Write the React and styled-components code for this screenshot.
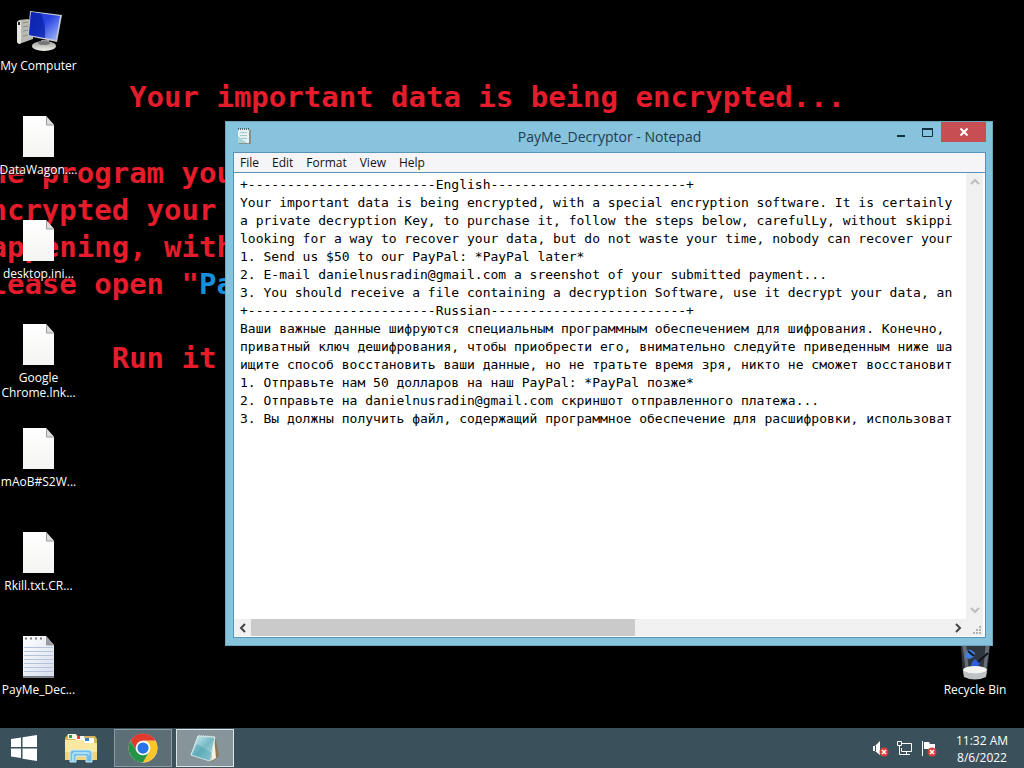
import React from "react";
import styled, { createGlobalStyle } from "styled-components";

const ui = `"Open Sans", "Noto Sans", sans-serif`;
const mono = `"DejaVu Sans Mono", "Liberation Mono", monospace`;

const Global = createGlobalStyle`
  * { box-sizing: border-box; }
  body { margin: 0; background: #000; font-family: ${ui}; }
  button { font: inherit; border: 0; padding: 0; background: none; color: inherit; }
  svg { display: block; }
`;

const Screen = styled.div`
  height: 100vh;
  display: flex;
  flex-direction: column;
  overflow: hidden;
`;

const Desktop = styled.main`
  position: relative;
  flex: 1;
  min-height: 0;
  display: flex;
  justify-content: space-between;
  overflow: hidden;
  background: #000;
`;

const Wallpaper = styled.div`
  position: absolute;
  left: -28px;
  top: 79px;
  display: flex;
  flex-direction: column;
  gap: 39px;
  font: bold 29px/37px ${mono};
  color: #e51c2c;
  white-space: pre;
`;

const WallpaperText = styled.p`
  margin: 0;
`;

const FileName = styled.span`
  color: #1590dd;
`;

const IconColumn = styled.nav`
  position: relative;
  width: ${(p) => p.$width};
  display: flex;
  flex-direction: column;
  justify-content: ${(p) => (p.$end ? "flex-end" : "flex-start")};
`;

const IconButton = styled.button`
  height: 104px;
  flex: none;
  padding-top: 8px;
  display: flex;
  flex-direction: column;
  align-items: center;
`;

const IconArt = styled.span`
  height: 50px;
  display: flex;
  align-items: center;
`;

const IconLabel = styled.span`
  font-size: 12px;
  line-height: 15px;
  color: #fff;
  white-space: pre;
  text-align: center;
  text-shadow: 1px 1px 1px #000, 0 0 2px #000;
`;

const Window = styled.section`
  position: absolute;
  left: 225px;
  right: 31px;
  top: 121px;
  bottom: 82px;
  display: flex;
  flex-direction: column;
  padding: 0 6px 7px 7px;
  background: #88c3de;
  border: 1px solid #6aa5bd;
`;

const TitleBar = styled.header`
  height: 30px;
  flex: none;
  display: grid;
  grid-template-columns: 110px 1fr 110px;
  align-items: start;
`;

const TitleIcon = styled.span`
  padding: 5px 0 0 3px;
`;

const Title = styled.h1`
  margin: 0;
  font-size: 14px;
  font-weight: 400;
  line-height: 30px;
  text-align: center;
  color: #203c4c;
`;

const Controls = styled.div`
  display: flex;
  justify-content: flex-end;
`;

const ControlButton = styled.button`
  width: ${(p) => (p.$close ? "45px" : "27px")};
  height: 20px;
  display: flex;
  align-items: center;
  justify-content: center;
  background: ${(p) => (p.$close ? "#c74f53" : "transparent")};
`;

const Client = styled.div`
  flex: 1;
  min-height: 0;
  display: flex;
  flex-direction: column;
  border: 1px solid #5793b6;
  background: #fff;
`;

const MenuBar = styled.nav`
  height: 20px;
  flex: none;
  display: flex;
  gap: 13px;
  padding-left: 6px;
  background: #f5f5f8;
  border-bottom: 1px solid #5793b6;
`;

const MenuItem = styled.button`
  font-size: 12px;
  line-height: 17px;
  color: #111;
`;

const Editor = styled.div`
  flex: 1;
  min-height: 0;
  display: grid;
  grid-template-columns: 1fr 17px;
  grid-template-rows: 1fr 17px;
  padding: 0 2px 1px 0;
`;

const Document = styled.textarea`
  margin: 3px 3px 0 6px;
  padding: 0;
  border: 0;
  outline: 0;
  resize: none;
  overflow: hidden;
  white-space: pre;
  font: 13px/18px ${mono};
  color: #000;
  background: #fff;
`;

const ScrollBar = styled.div`
  display: flex;
  flex-direction: ${(p) => (p.$vertical ? "column" : "row")};
  justify-content: space-between;
  background: #f0f0f1;
`;

const ScrollButton = styled.button`
  width: 17px;
  height: 17px;
  flex: none;
  display: flex;
  align-items: center;
  justify-content: center;
`;

const Track = styled.div`
  flex: 1;
`;

const Thumb = styled.div`
  width: 55%;
  height: 100%;
  background: #cacacb;
`;

const Grip = styled.div`
  display: flex;
  align-items: flex-end;
  justify-content: flex-end;
  padding: 2px;
  background: #f0f0f1;
`;

const TaskBar = styled.footer`
  height: 40px;
  flex: none;
  display: flex;
  justify-content: space-between;
  background: #3a515b;
`;

const TaskGroup = styled.div`
  display: flex;
  align-items: center;
`;

const TaskButton = styled.button`
  width: ${(p) => (p.$start ? "48px" : "58px")};
  height: 38px;
  margin-left: ${(p) => (p.$start ? "0" : "4px")};
  display: flex;
  align-items: center;
  justify-content: center;
  border: 1px solid ${(p) => (p.$active ? "#dfe5e7" : p.$open ? "#8d9ba1" : "transparent")};
  background: ${(p) => (p.$active ? "#87949a" : p.$open ? "#5c6e76" : "transparent")};
`;

const TrayButton = styled.button`
  width: 24px;
  height: 24px;
  display: flex;
  align-items: center;
  justify-content: center;
`;

const Clock = styled.time`
  width: 84px;
  padding-top: 2px;
  font-size: 12px;
  line-height: 17px;
  text-align: center;
  color: #fff;
`;

const ComputerIcon = () => (
  <svg width="48" height="46" viewBox="0 0 48 46">
    <defs>
      <linearGradient id="scr" x1="0" y1="0" x2="1" y2="1">
        <stop offset="0" stopColor="#1536c8" />
        <stop offset="0.45" stopColor="#2a45e0" />
        <stop offset="1" stopColor="#a8beff" />
      </linearGradient>
      <linearGradient id="base" x1="0" y1="0" x2="0" y2="1">
        <stop offset="0" stopColor="#9a9a98" />
        <stop offset="1" stopColor="#f2f2ee" />
      </linearGradient>
    </defs>
    <path d="M2 12l2-2 9-1 5 3v17L4 34l-2-2z" fill="#b9b9b4" />
    <path d="M2 12l4-1v22l-2 1-2-2z" fill="#e4e4e0" />
    <path d="M3 12h2v3H3z" fill="#222" />
    <path d="M8 13l5-1M8 17l5-1M8 21l5-1M8 26l5-1" stroke="#8d8d88" />
    <path d="M26 30h8v6h-8z" fill="#999" />
    <ellipse cx="29" cy="36" rx="12" ry="5" fill="url(#base)" />
    <ellipse cx="29" cy="33" rx="6" ry="2" fill="#777" />
    <path d="M15 1l32 4-5 27-29-6z" fill="#c6cad2" />
    <path d="M16 2l29 4-4 24-27-5z" fill="url(#scr)" />
    <path d="M16 2l10 1.500q5 11 4 24.500l-16-3z" fill="#0820a8" opacity=".75" />
  </svg>
);

const PageIcon = ({ lined }) => (
  <svg width="32" height="42" viewBox="0 0 32 42">
    <defs>
      <linearGradient id="paper" x1="0" y1="0" x2="0" y2="1">
        <stop offset="0" stopColor="#fff" />
        <stop offset="1" stopColor="#f4f4f2" />
      </linearGradient>
      <linearGradient id="note" x1="0" y1="0" x2="1" y2="1">
        <stop offset="0" stopColor="#fff" />
        <stop offset="1" stopColor="#d5dcec" />
      </linearGradient>
    </defs>
    <path d="M0 0h23l8 9v32H0z" fill={lined ? "url(#note)" : "url(#paper)"} />
    {lined && (
      <>
        <path d="M2 2.500h19" stroke="#777" strokeWidth="2" strokeDasharray="2 3" />
        <path d="M1 11.500h29M1 15.500h29M1 19.500h29M1 23.500h29M1 27.500h29M1 31.500h29M1 35.500h29" stroke="#b4c2da" />
        <path d="M0 41h31" stroke="#767c86" strokeWidth="2" />
      </>
    )}
    <path d="M23 0v9h8z" fill={lined ? "#9a9da3" : "#dcdcdc"} />
    <path d="M23.500 1v8H31" fill="none" stroke="#999" />
  </svg>
);

const BinIcon = () => (
  <svg width="34" height="50" viewBox="0 0 34 50">
    <path d="M2 4h31l-4 38q-12 6-24 0z" fill="#30363e" />
    <path d="M4 10l4 30h3L8 10zM28 10l-3 30h3l4-30z" fill="#8a929b" opacity=".6" />
    <path d="M8 21q1-4 5-3l4 3-1 4-5 2-4-2z" fill="#3f80e0" />
    <path d="M14 30l3-3 5 4-3 5-6-2z" fill="#2f5cd8" />
    <path d="M10 19l6 5M20 30l10-9" stroke="#10151f" strokeWidth="2" />
    <ellipse cx="17" cy="38" rx="12" ry="4" fill="#f2f2f0" />
    <path d="M5 39q12 5 24 0l-1 6q-11 5-22 0z" fill="#bfc1c2" />
    <ellipse cx="17" cy="4" rx="15" ry="4" fill="#aab2ba" />
  </svg>
);

const SmallNotepad = () => (
  <svg width="16" height="18" viewBox="0 0 16 18">
    <path d="M3 3h12v14H3z" fill="#8a9188" />
    <path d="M2 2h11v14H2z" fill="#e4f1f0" />
    <path d="M4 5.500h7M4 8.500h7M4 11.500h7" stroke="#a3c8cc" />
    <path d="M2 16V9l9 7z" fill="#abd5da" />
    <path d="M2 2h12" stroke="#50666c" strokeWidth="2" strokeDasharray="1 1" />
  </svg>
);

const WindowsLogo = () => (
  <svg width="28" height="26" viewBox="0 0 28 26" fill="#fff">
    <path d="M1 4l10-1.500V12H1zM12.500 2.200L27 0v12H12.500zM1 13.500h10V23L1 21.500zM12.500 13.500H27V26l-14.500-2.300z" />
  </svg>
);

const FolderIcon = () => (
  <svg width="34" height="32" viewBox="0 0 34 32">
    <path d="M1 6l3-4h8l2 2h17l2 3v20H1z" fill="#d8b45c" />
    <path d="M4 2h8v5H4z" fill="#f7f7ec" /><path d="M5 3h3v3H5z" fill="#329a43" />
    <path d="M12 4h8v5h-8z" fill="#fff" /><path d="M13 4h3v3h-3z" fill="#d94a38" />
    <path d="M20 6h10v5H20z" fill="#fff" /><path d="M21 6h4v3h-4z" fill="#397fd1" />
    <path d="M1 8h17l3 3h12v17H1z" fill="#f9e8a0" />
    <path d="M1 20h32v8H1z" fill="#eed27c" />
    <path d="M6 30V21q0-3 3-3h16q3 0 3 3v9h-6v-6H12v6z" fill="#72bde5" stroke="#c9eefb" />
    <path d="M9 29v-6q0-2 2-2h12q2 0 2 2" fill="none" stroke="#a9def6" strokeWidth="2" />
  </svg>
);

const ChromeIcon = () => (
  <svg width="30" height="30" viewBox="0 0 48 48">
    <circle cx="24" cy="24" r="23" fill="#fff" />
    <path d="M4.080 12.500A23 23 0 0 1 43.920 12.500H24A11.500 11.500 0 0 0 14.040 29.750z" fill="#e23b2e" />
    <path d="M43.920 12.500A23 23 0 0 1 24 47L33.960 29.750A11.500 11.500 0 0 0 24 12.500z" fill="#fbc62d" />
    <path d="M24 47A23 23 0 0 1 4.080 12.500L14.040 29.750A11.500 11.500 0 0 0 33.960 29.750z" fill="#269447" />
    <circle cx="24" cy="24" r="11.500" fill="#fff" />
    <circle cx="24" cy="24" r="9" fill="#2a75e6" />
  </svg>
);

const NotepadIcon = () => (
  <svg width="32" height="30" viewBox="0 0 32 30">
    <defs>
      <linearGradient id="pad" x1="0" y1="0" x2="1" y2="1">
        <stop offset="0" stopColor="#d9f1f3" />
        <stop offset="0.5" stopColor="#76b9c5" />
        <stop offset="1" stopColor="#c4e6e8" />
      </linearGradient>
    </defs>
    <path d="M26 2l4 21-7 6-5-2z" fill="#8c7a52" />
    <path d="M25 3l2 22-5 3z" fill="#f5f2e4" />
    <path d="M9 3l17 1-5 24-19-6z" fill="url(#pad)" stroke="#dceff0" />
    <path d="M3 22l5-11 15 9-2 8z" fill="#3d98a8" opacity=".4" />
    <path d="M10 3l16 1" stroke="#c9d6d8" strokeWidth="2" strokeDasharray="1 1" />
  </svg>
);

const ErrorBadge = () => (
  <>
    <circle cx="12" cy="12" r="4.500" fill="#d8403c" />
    <path d="M10 10l4 4M14 10l-4 4" stroke="#fff" strokeWidth="1.500" />
  </>
);

const SpeakerIcon = () => (
  <svg width="17" height="17" viewBox="0 0 17 17">
    <path d="M1 6h2l5-5v14l-5-4H1z" fill="#fff" />
    <path d="M3.500 6v5" stroke="#3a515b" />
    <ErrorBadge />
  </svg>
);

const NetworkIcon = () => (
  <svg width="17" height="17" viewBox="0 0 17 17" fill="none" stroke="#fff">
    <path d="M6 3.500h9.500v8H5.500V8M10.500 12v2.500M6 14.500h8" />
    <path d="M1.500 1.500h4v4h-4zM3.500 6v8.500H6" />
  </svg>
);

const FlagIcon = () => (
  <svg width="17" height="17" viewBox="0 0 17 17">
    <path d="M2.500 1v15" stroke="#fff" />
    <path d="M4 2h5l1 2h5v7h-5l-1-2H4z" fill="#fff" />
    <ErrorBadge />
  </svg>
);

const Chevron = ({ dir, faint }) => {
  const paths = { up: "M1 7l4-4 4 4", down: "M1 2l4 4 4-4", left: "M7 1L3 5l4 4", right: "M3 1l4 4-4 4" };
  return (
    <svg width="10" height="10" viewBox="0 0 10 10">
      <path d={paths[dir]} fill="none" stroke={faint ? "#bdbdc0" : "#444"} strokeWidth="2" />
    </svg>
  );
};

const files = ["DataWagon....", "desktop.ini...", "Google\nChrome.lnk...", "mAoB#S2W...", "Rkill.txt.CR..."];

const note = `+------------------------English-------------------------+
Your important data is being encrypted, with a special encryption software. It is certainly
a private decryption Key, to purchase it, follow the steps below, carefulLy, without skippi
looking for a way to recover your data, but do not waste your time, nobody can recover your
1. Send us $50 to our PayPal: *PayPal later*
2. E-mail danielnusradin@gmail.com a sreenshot of your submitted payment...
3. You should receive a file containing a decryption Software, use it decrypt your data, an
+------------------------Russian-------------------------+
Ваши важные данные шифруются специальным программным обеспечением для шифрования. Конечно,
приватный ключ дешифрования, чтобы приобрести его, внимательно следуйте приведенным ниже ша
ищите способ восстановить ваши данные, но не тратьте время зря, никто не сможет восстановит
1. Отправьте нам 50 долларов на наш PayPal: *PayPal позже*
2. Отправьте на danielnusradin@gmail.com скриншот отправленного платежа...
3. Вы должны получить файл, содержащий программное обеспечение для расшифровки, использоват`;

const DesktopItem = ({ label, children }) => (
  <IconButton>
    <IconArt>{children}</IconArt>
    <IconLabel>{label}</IconLabel>
  </IconButton>
);

export default function App() {
  return (
    <Screen>
      <Global />
      <Desktop>
        <Wallpaper>
          <WallpaperText>{"         Your important data is being encrypted..."}</WallpaperText>
          <WallpaperText>
            {"The program you\nencrypted your\nhappening, with\nPlease open \""}
            <FileName>Pa</FileName>
            {"\n\n        Run it"}
          </WallpaperText>
        </Wallpaper>
        <IconColumn $width="77px" aria-label="Desktop">
          <DesktopItem label="My Computer"><ComputerIcon /></DesktopItem>
          {files.map((f) => (
            <DesktopItem key={f} label={f}><PageIcon /></DesktopItem>
          ))}
          <DesktopItem label="PayMe_Dec..."><PageIcon lined /></DesktopItem>
        </IconColumn>
        <IconColumn $width="98px" $end aria-label="Bin">
          <DesktopItem label="Recycle Bin"><BinIcon /></DesktopItem>
        </IconColumn>
        <Window>
          <TitleBar>
            <TitleIcon><SmallNotepad /></TitleIcon>
            <Title>PayMe_Decryptor - Notepad</Title>
            <Controls>
              <ControlButton aria-label="Minimize">
                <svg width="10" height="12"><path d="M1 10h8" stroke="#15303f" strokeWidth="2" /></svg>
              </ControlButton>
              <ControlButton aria-label="Maximize">
                <svg width="11" height="9"><path d="M.5 1h10v7.500H.5z" fill="none" stroke="#15303f" /><path d="M0 1h11" stroke="#15303f" strokeWidth="2" /></svg>
              </ControlButton>
              <ControlButton $close aria-label="Close">
                <svg width="8" height="8"><path d="M.5.5l7 7M7.500.5l-7 7" stroke="#fff" strokeWidth="2" /></svg>
              </ControlButton>
            </Controls>
          </TitleBar>
          <Client>
            <MenuBar>
              {["File", "Edit", "Format", "View", "Help"].map((m) => <MenuItem key={m}>{m}</MenuItem>)}
            </MenuBar>
            <Editor>
              <Document aria-label="Document text" wrap="off" spellCheck={false} defaultValue={note} />
              <ScrollBar $vertical>
                <ScrollButton aria-label="Scroll up"><Chevron dir="up" faint /></ScrollButton>
                <ScrollButton aria-label="Scroll down"><Chevron dir="down" faint /></ScrollButton>
              </ScrollBar>
              <ScrollBar>
                <ScrollButton aria-label="Scroll left"><Chevron dir="left" /></ScrollButton>
                <Track><Thumb /></Track>
                <ScrollButton aria-label="Scroll right"><Chevron dir="right" /></ScrollButton>
              </ScrollBar>
              <Grip>
                <svg width="8" height="8" fill="#b2b2b6">
                  <path d="M6 0h2v2H6zM3 3h2v2H3zM6 3h2v2H6zM0 6h2v2H0zM3 6h2v2H3zM6 6h2v2H6z" />
                </svg>
              </Grip>
            </Editor>
          </Client>
        </Window>
      </Desktop>
      <TaskBar>
        <TaskGroup>
          <TaskButton $start aria-label="Start"><WindowsLogo /></TaskButton>
          <TaskButton aria-label="File Explorer"><FolderIcon /></TaskButton>
          <TaskButton $open aria-label="Google Chrome"><ChromeIcon /></TaskButton>
          <TaskButton $active aria-label="Notepad"><NotepadIcon /></TaskButton>
        </TaskGroup>
        <TaskGroup>
          <TrayButton aria-label="Volume"><SpeakerIcon /></TrayButton>
          <TrayButton aria-label="Network"><NetworkIcon /></TrayButton>
          <TrayButton aria-label="Action Center"><FlagIcon /></TrayButton>
          <Clock>11:32 AM<br />8/6/2022</Clock>
        </TaskGroup>
      </TaskBar>
    </Screen>
  );
}
